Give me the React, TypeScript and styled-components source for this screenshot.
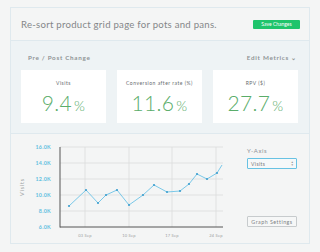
import React from "react"
import styled, { createGlobalStyle } from "styled-components"

const GlobalStyle = createGlobalStyle`
  body {
    margin: 0;
    background: #f4f5f5;
    font-family: Lato, "Open Sans", sans-serif;
  }
`

const Page = styled.div`
  padding: 7px 10px 9px;
`

const Panel = styled.div`
  width: 300px;
  box-sizing: border-box;
  border: 1px solid #dfe9ee;
  background: #f4f5f5;
`

const Header = styled.div`
  height: 32px;
  display: flex;
  align-items: center;
  justify-content: space-between;
  padding: 0 9px 0 10px;
`

const Title = styled.h1`
  margin: 0;
  white-space: nowrap;
  font-size: 9.6px;
  font-weight: 400;
  letter-spacing: 0.25px;
  color: #848789;
`

const SaveButton = styled.button`
  height: 9px;
  width: 47px;
  padding: 0;
  border: none;
  border-radius: 1px;
  background: #1fc46c;
  color: #fff;
  font-family: inherit;
  font-size: 5px;
  line-height: 9px;
`

const Metrics = styled.div`
  background: #eef3f5;
  border-top: 1px solid #dfe9ee;
  border-bottom: 1px solid #dfe9ee;
  padding: 11px 11px 10px 10px;
`

const MetricsHead = styled.div`
  display: flex;
  justify-content: space-between;
  align-items: center;
  padding: 0 1px 0 7px;
  height: 10px;
  margin-bottom: 8px;
`

const SmallCaps = styled.span`
  font-size: 6.3px;
  font-weight: 700;
  letter-spacing: 0.7px;
  color: #8e9396;
`

const CardRow = styled.div`
  display: grid;
  grid-template-columns: repeat(3, 85px);
  column-gap: 11px;
`

const Card = styled.div`
  height: 53px;
  background: #fff;
  display: flex;
  flex-direction: column;
  align-items: center;
  padding-top: 10px;
  box-sizing: border-box;
`

const CardLabel = styled.div`
  font-size: 5px;
  letter-spacing: 0.5px;
  color: #666b6e;
  line-height: 7px;
`

const CardValue = styled.div`
  margin-top: 5px;
  font-size: 21px;
  font-weight: 300;
  color: #5aad6a;
  line-height: 22px;
  letter-spacing: 0.3px;
`

const Percent = styled.span`
  font-size: 14px;
  margin-left: 2px;
`

const ChartSection = styled.div`
  height: 109px;
  display: flex;
`

const Side = styled.div`
  width: 50px;
  margin-left: 11px;
  padding-top: 13px;
  display: flex;
  flex-direction: column;
`

const SideLabel = styled.div`
  font-size: 6px;
  letter-spacing: 0.6px;
  color: #8e9396;
  line-height: 8px;
`

const Select = styled.div`
  margin-top: 3px;
  height: 9px;
  border: 1px solid #68c2e3;
  border-radius: 1px;
  background: #f6f8f9;
  display: flex;
  align-items: center;
  justify-content: space-between;
  padding: 0 2px 0 3px;
  font-size: 5px;
  letter-spacing: 0.4px;
  color: #777;
`

const Arrows = styled.span`
  display: flex;
  flex-direction: column;
  font-size: 3px;
  line-height: 3px;
  color: #999;
`

const GraphButton = styled.button`
  margin-top: 47px;
  height: 11px;
  padding: 0;
  border: 1px solid #c7cbcd;
  border-radius: 1px;
  background: #f6f7f7;
  font-family: inherit;
  font-size: 5.3px;
  letter-spacing: 0.5px;
  color: #7c8184;
`

const points: [number, number][] = [
  [69, 206], [86, 190], [98, 203], [106, 195], [117, 190], [129, 205],
  [143, 195], [154, 185], [167, 192], [180, 191], [189, 184], [197, 174],
  [207, 179], [217, 173], [222, 165],
]

const yTicks = ["16.0K", "14.0K", "12.0K", "10.0K", "8.0K", "6.0K"]
const xTicks: [string, number][] = [["03 Sep", 85], ["10 Sep", 129], ["17 Sep", 172], ["24 Sep", 216]]

const Chart: React.FC = () => (
  <svg width={225} height={109} viewBox="11 134 225 109">
    {yTicks.map((t, i) => (
      <g key={t}>
        {i < 5 && <line x1={60} x2={223} y1={147 + i * 16} y2={147 + i * 16} stroke="#dcdcdc" strokeWidth={0.8} />}
        <text x={51} y={149 + i * 16} textAnchor="end" fontSize={5.3} fontWeight={700} fill="#62c0e0" letterSpacing={0.3}>
          {t}
        </text>
      </g>
    ))}
    {xTicks.map(([t, x]) => (
      <g key={t}>
        <line x1={x} x2={x} y1={147} y2={227} stroke="#dcdcdc" strokeWidth={0.8} />
        <text x={x} y={236.5} textAnchor="middle" fontSize={4} fill="#9a9ea0" letterSpacing={0.2}>
          {t}
        </text>
      </g>
    ))}
    <line x1={60} x2={60} y1={147} y2={227.5} stroke="#555" strokeWidth={1} />
    <line x1={60} x2={223} y1={227} y2={227} stroke="#555" strokeWidth={1} />
    <text
      x={23}
      y={187}
      transform="rotate(-90 23 187)"
      textAnchor="middle"
      fontSize={5.5}
      fill="#9a9ea0"
      letterSpacing={0.8}
      dy={1}
    >
      Visits
    </text>
    <polyline
      points={points.map((p) => p.join(",")).join(" ")}
      fill="none"
      stroke="#6cc3e6"
      strokeWidth={0.9}
    />
    {points.slice(0, -1).map(([x, y]) => (
      <circle key={x} cx={x} cy={y} r={1.1} fill="#3f9fcf" />
    ))}
  </svg>
)

export default function App() {
  return (
    <>
      <GlobalStyle />
      <Page>
        <Panel>
          <Header>
            <Title>Re-sort product grid page for pots and pans.</Title>
            <SaveButton>Save Changes</SaveButton>
          </Header>
          <Metrics>
            <MetricsHead>
              <SmallCaps>Pre / Post Change</SmallCaps>
              <SmallCaps>Edit Metrics ⌄</SmallCaps>
            </MetricsHead>
            <CardRow>
              <Card>
                <CardLabel>Visits</CardLabel>
                <CardValue>
                  9.4<Percent>%</Percent>
                </CardValue>
              </Card>
              <Card>
                <CardLabel>Conversion after rate (%)</CardLabel>
                <CardValue>
                  11.6<Percent>%</Percent>
                </CardValue>
              </Card>
              <Card>
                <CardLabel>RPV ($)</CardLabel>
                <CardValue>
                  27.7<Percent>%</Percent>
                </CardValue>
              </Card>
            </CardRow>
          </Metrics>
          <ChartSection>
            <Chart />
            <Side>
              <SideLabel>Y-Axis</SideLabel>
              <Select>
                Visits
                <Arrows>
                  <span>▲</span>
                  <span>▼</span>
                </Arrows>
              </Select>
              <GraphButton>Graph Settings</GraphButton>
            </Side>
          </ChartSection>
        </Panel>
      </Page>
    </>
  )
}
